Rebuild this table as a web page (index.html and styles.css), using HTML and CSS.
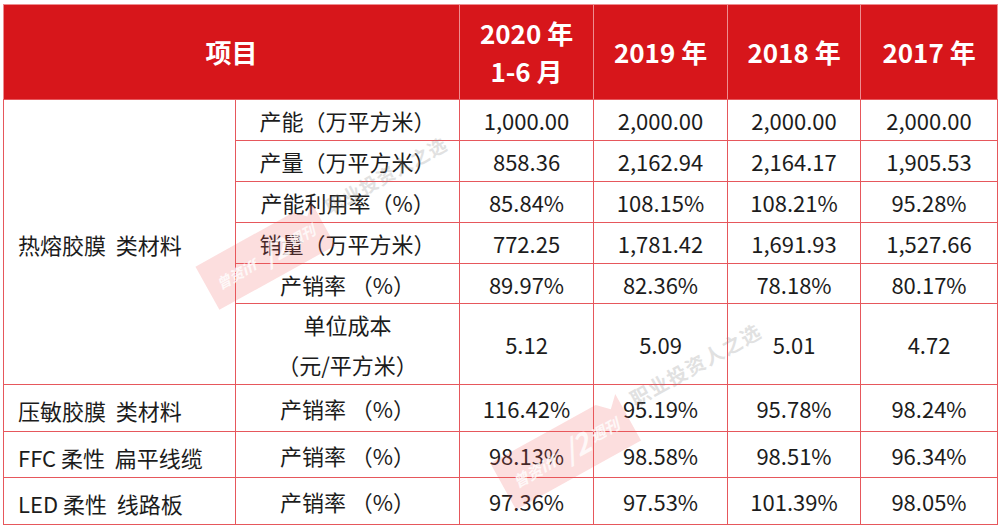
FILE: index.html
```html
<!DOCTYPE html>
<html lang="zh">
<head>
<meta charset="utf-8">
<title>产销情况</title>
<link rel="stylesheet" href="styles.css">
</head>
<body>
<div class="page">
<table class="data">
  <colgroup>
    <col class="c-cat">
    <col class="c-item">
    <col class="c-num">
    <col class="c-num">
    <col class="c-num-s">
    <col class="c-num-l">
  </colgroup>
  <thead>
    <tr class="r-head">
      <th colspan="2">项目</th>
      <th>2020 年<br>1-6 月</th>
      <th>2019 年</th>
      <th>2018 年</th>
      <th>2017 年</th>
    </tr>
  </thead>
  <tbody>
    <tr class="r-41">
      <td class="cat" rowspan="6">热熔胶膜&nbsp; 类材料</td>
      <td class="item">产能（万平方米）</td>
      <td>1,000.00</td><td>2,000.00</td><td>2,000.00</td><td>2,000.00</td>
    </tr>
    <tr class="r-41">
      <td class="item">产量（万平方米）</td>
      <td>858.36</td><td>2,162.94</td><td>2,164.17</td><td>1,905.53</td>
    </tr>
    <tr class="r-41">
      <td class="item">产能利用率（%）</td>
      <td>85.84%</td><td>108.15%</td><td>108.21%</td><td>95.28%</td>
    </tr>
    <tr class="r-41">
      <td class="item">销量（万平方米）</td>
      <td>772.25</td><td>1,781.42</td><td>1,691.93</td><td>1,527.66</td>
    </tr>
    <tr class="r-40">
      <td class="item">产销率 （%）</td>
      <td>89.97%</td><td>82.36%</td><td>78.18%</td><td>80.17%</td>
    </tr>
    <tr class="r-79">
      <td class="item two">单位成本<br>（元/平方米）</td>
      <td>5.12</td><td>5.09</td><td>5.01</td><td>4.72</td>
    </tr>
    <tr class="r-47">
      <td class="cat">压敏胶膜&nbsp; 类材料</td>
      <td class="item">产销率 （%）</td>
      <td>116.42%</td><td>95.19%</td><td>95.78%</td><td>98.24%</td>
    </tr>
    <tr class="r-46">
      <td class="cat">FFC 柔性&nbsp; 扁平线缆</td>
      <td class="item">产销率 （%）</td>
      <td>98.13%</td><td>98.58%</td><td>98.51%</td><td>96.34%</td>
    </tr>
    <tr class="r-47">
      <td class="cat">LED 柔性&nbsp; 线路板</td>
      <td class="item">产销率 （%）</td>
      <td>97.36%</td><td>97.53%</td><td>101.39%</td><td>98.05%</td>
    </tr>
  </tbody>
</table>

<svg class="watermark" width="1000" height="526" viewBox="0 0 1000 526" aria-hidden="true">
  <g transform="translate(262 258) rotate(-29) scale(1.3)">
    <path class="wm-badge" d="M-48 -19 H38 L46 -11 L54 -19 V19 H-48 Z"/>
    <text class="wm-logo" x="-40" y="6">曾资iff</text>
    <text class="wm-logo big" x="2" y="8">/2</text>
    <text class="wm-logo" x="24" y="4">週刊</text>
    <text class="wm-slogan" x="62" y="-4">职业投资人之选</text>
  </g>
  <g transform="translate(562 454) rotate(-29) scale(1.4)">
    <path class="wm-badge" d="M-48 -19 H38 L46 -11 L54 -19 V19 H-48 Z"/>
    <text class="wm-logo" x="-40" y="6">曾资iff</text>
    <text class="wm-logo big" x="2" y="8">/2</text>
    <text class="wm-logo" x="24" y="4">週刊</text>
    <text class="wm-slogan" x="62" y="-4">职业投资人之选</text>
  </g>
</svg>
</div>
</body>
</html>
```

FILE: styles.css
```css
html, body {
  margin: 0;
  padding: 0;
  background: #ffffff;
}

.page {
  position: relative;
  width: 1000px;
  height: 526px;
  padding: 4px 0 0 3px;
  box-sizing: border-box;
  font-family: "Noto Sans CJK SC", "Noto Sans", sans-serif;
}

.data {
  width: 994px;
  table-layout: fixed;
  border-collapse: collapse;
  color: #1c1c1c;
  font-size: 22px;
}

.c-cat { width: 232px; }
.c-item { width: 224px; }
.c-num { width: 134px; }
.c-num-s { width: 133px; }
.c-num-l { width: 137px; }

.data th,
.data td {
  border: 1px solid #e6575c;
  padding: 0;
  text-align: center;
  vertical-align: middle;
  line-height: 30px;
  white-space: nowrap;
}

.data th {
  background: #d7161b;
  color: #ffffff;
  font-size: 26px;
  font-weight: 700;
  line-height: 38px;
  border-color: #ee8d90;
  border-bottom-color: #e6575c;
}

.r-head { height: 95px; }
.r-41 { height: 41px; }
.r-40 { height: 40px; }
.r-79 { height: 79px; }
.r-47 { height: 47px; }
.r-46 { height: 46px; }

.data td.cat {
  text-align: left;
  padding-left: 14px;
  padding-top: 4px;
}

.data td.two {
  line-height: 40px;
}

.watermark {
  position: absolute;
  left: 0;
  top: 0;
  pointer-events: none;
}

.wm-badge {
  fill: #f25c5c;
  opacity: 0.2;
}

.wm-logo {
  fill: #ffffff;
  opacity: 0.8;
  font-size: 11px;
  font-weight: 700;
  font-style: italic;
}

.wm-logo.big {
  font-size: 20px;
}

.wm-slogan {
  fill: #8a8a8a;
  opacity: 0.25;
  font-size: 14px;
  font-weight: 700;
  letter-spacing: 1px;
}
```
